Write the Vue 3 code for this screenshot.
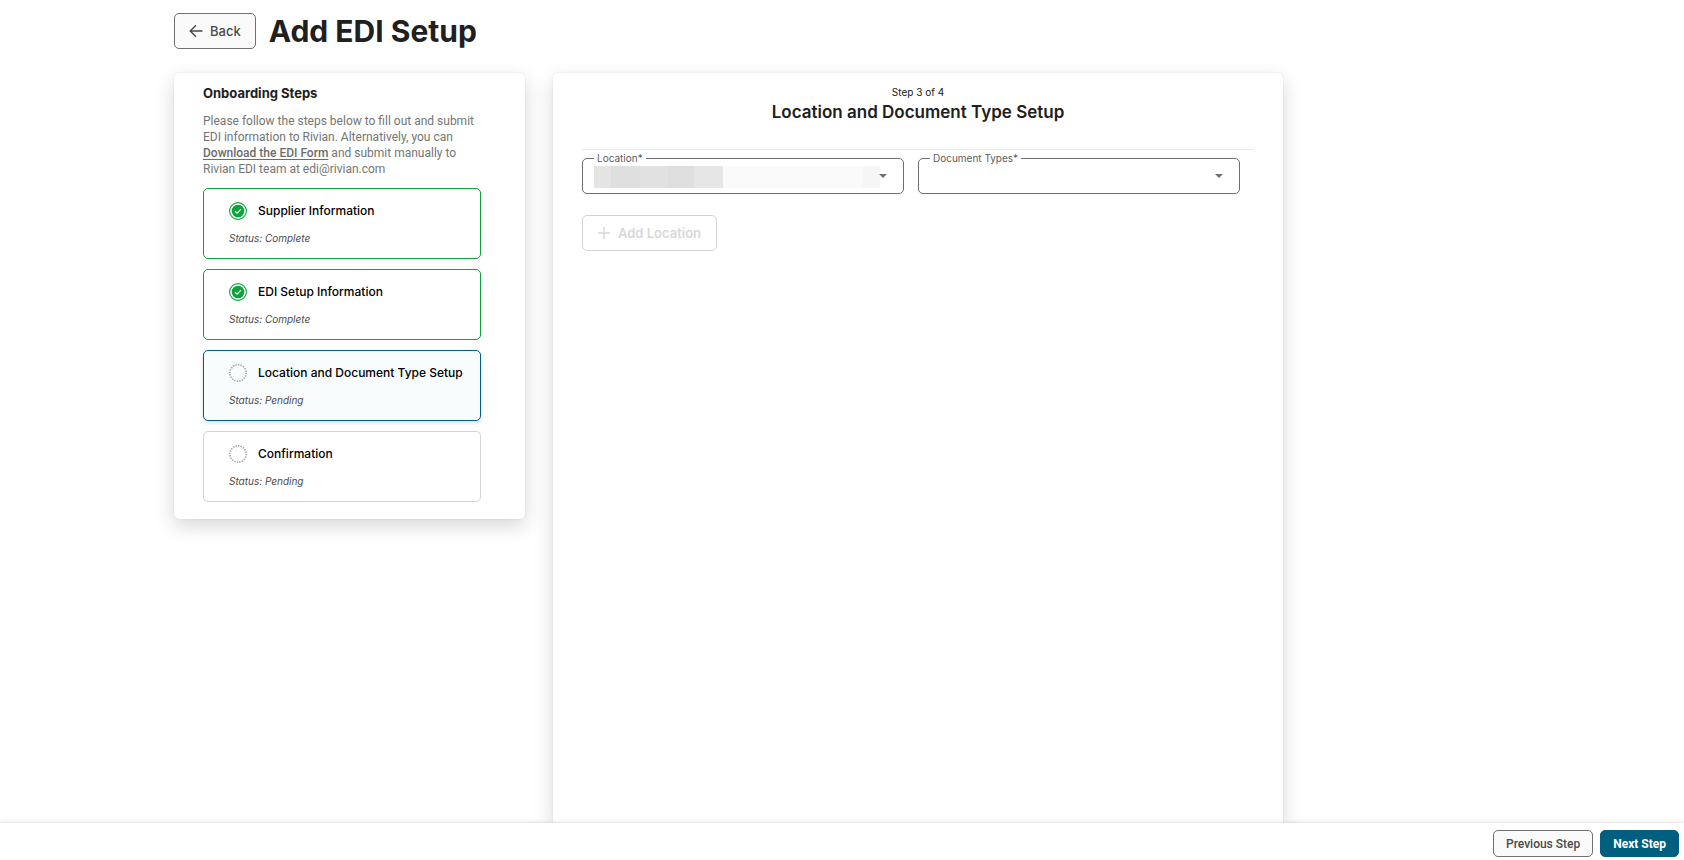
<script setup>
import { ref } from 'vue'

const steps = [
  { title: 'Supplier Information', status: 'Complete', state: 'done' },
  { title: 'EDI Setup Information', status: 'Complete', state: 'done' },
  { title: 'Location and Document Type Setup', status: 'Pending', state: 'current' },
  { title: 'Confirmation', status: 'Pending', state: 'pending' },
]
const location = ref('')
const documentTypes = ref('')
</script>

<template>
  <div class="page">
    <div class="content">
      <header class="header">
        <button type="button" class="btn">
          <svg class="icon" viewBox="0 0 14 14" aria-hidden="true">
            <path d="M13.5 7H1.5M7 1.2L1.2 7L7 12.8" />
          </svg>
          Back
        </button>
        <h1>Add EDI Setup</h1>
      </header>

      <div class="columns">
        <aside class="card sidebar">
          <h2>Onboarding Steps</h2>
          <p class="intro">
            Please follow the steps below to fill out and submit<br />
            EDI information to Rivian. Alternatively, you can<br />
            <a href="#">Download the EDI Form</a> and submit manually to<br />
            Rivian EDI team at edi@rivian.com
          </p>
          <ol class="steps">
            <li v-for="step in steps" :key="step.title" class="step" :class="step.state">
              <div class="step-head">
                <svg v-if="step.state === 'done'" class="step-icon" viewBox="0 0 18 18" aria-hidden="true">
                  <circle cx="9" cy="9" r="8.4" fill="none" stroke="#0aa43b" stroke-width="1.1" />
                  <circle cx="9" cy="9" r="6.3" fill="#0aa43b" />
                  <path d="M6 9.3L8.1 11.2L12 7.2" fill="none" stroke="#fff" stroke-width="1.2" />
                </svg>
                <svg v-else class="step-icon" viewBox="0 0 18 18" aria-hidden="true">
                  <circle cx="9" cy="9" r="8.2" fill="none" stroke="#a0a0a0" stroke-width="1.6" pathLength="40" stroke-dasharray="1 1" />
                </svg>
                <span class="step-title">{{ step.title }}</span>
              </div>
              <em class="step-status">Status: {{ step.status }}</em>
            </li>
          </ol>
        </aside>

        <main class="card main">
          <div class="main-head">
            <p>Step 3 of 4</p>
            <h2>Location and Document Type Setup</h2>
          </div>
          <form @submit.prevent>
            <div class="fields">
              <div class="field">
                <label for="location">Location*</label>
                <select id="location" v-model="location"><option value=""></option></select>
                <div class="redacted" aria-hidden="true"></div>
                <svg class="caret" viewBox="0 0 8 4" aria-hidden="true"><path d="M0 0h8L4 4z" /></svg>
              </div>
              <div class="field">
                <label for="document-types">Document Types*</label>
                <select id="document-types" v-model="documentTypes"><option value=""></option></select>
                <svg class="caret" viewBox="0 0 8 4" aria-hidden="true"><path d="M0 0h8L4 4z" /></svg>
              </div>
            </div>
            <button type="button" class="btn add" disabled>
              <svg class="icon" viewBox="0 0 14 14" aria-hidden="true"><path d="M7 1V13M1 7H13" /></svg>
              Add Location
            </button>
          </form>
        </main>
      </div>
    </div>

    <footer class="footer">
      <button type="button" class="btn small">Previous Step</button>
      <button type="button" class="btn small primary">Next Step</button>
    </footer>
  </div>
</template>

<style>
body {
  margin: 0;
  background: #fff;
}
</style>

<style scoped>
.page {
  display: flex;
  flex-direction: column;
  height: 100vh;
  font-family: Inter, "Liberation Sans", sans-serif;
  color: #202020;
}
h1, h2, p, ol {
  margin: 0;
  padding: 0;
}
.content {
  flex: 1;
  min-height: 0;
  display: flex;
  flex-direction: column;
  gap: 24px;
  padding: 13px 174px 0;
  overflow: hidden;
}
.header {
  display: flex;
  align-items: center;
  gap: 13px;
}
h1 {
  font-size: 30px;
  line-height: 36px;
  font-weight: 700;
}
.btn {
  box-sizing: border-box;
  display: flex;
  align-items: center;
  height: 36px;
  padding: 0 14px;
  gap: 7px;
  border: 1px solid #707072;
  border-radius: 5px;
  background: #fafafa;
  color: #4a4a4a;
  font: 500 13px Inter, "Liberation Sans", sans-serif;
}
.icon {
  width: 14px;
  height: 14px;
  fill: none;
  stroke: currentColor;
  stroke-width: 1.4;
}
.columns {
  flex: 1;
  min-height: 0;
  display: grid;
  grid-template-columns: 351fr 730fr 199fr;
  gap: 28px;
}
.card {
  background: #fff;
  border-radius: 5px;
  box-shadow: 0 0 2px rgba(0, 0, 0, 0.1), 0 7px 20px rgba(0, 0, 0, 0.16);
}
.sidebar {
  align-self: start;
  padding: 12px 44px 17px 29px;
}
.sidebar h2 {
  font-size: 13px;
  line-height: 16px;
  font-weight: 700;
}
.intro {
  margin: 12px 0 11px;
  font-family: Roboto, "Liberation Sans", sans-serif;
  font-size: 12px;
  line-height: 16px;
  color: #757575;
  white-space: nowrap;
}
.intro a {
  color: #6c6c6c;
  font-weight: 500;
  text-underline-offset: 2px;
}
.steps {
  display: grid;
  gap: 10px;
  list-style: none;
}
.step {
  padding: 13px 0 13px 25px;
  border: 1px solid #d3d3d3;
  border-radius: 5px;
  color: #000;
}
.step.done {
  border-color: #0aa43b;
}
.step.current {
  border-color: #005f7f;
  background: #f8fcfd;
  box-shadow: 0 2px 4px rgba(0, 0, 0, 0.14);
}
.step-head {
  display: flex;
  align-items: center;
  gap: 11px;
  height: 18px;
}
.step-icon {
  width: 18px;
  height: 18px;
}
.step-title {
  font-size: 12px;
  line-height: 18px;
  font-weight: 500;
}
.step-status {
  display: block;
  margin-top: 11px;
  font-size: 10px;
  line-height: 14px;
  color: #4a4a4a;
}
.main {
  border-radius: 5px 5px 0 0;
  padding: 12px 29px 0;
}
.main-head {
  padding-bottom: 24px;
  border-bottom: 1px solid #ececec;
  text-align: center;
}
.main-head p {
  font-size: 10px;
  line-height: 14px;
}
.main-head h2 {
  font-size: 17px;
  line-height: 26px;
  font-weight: 600;
}
.fields {
  display: grid;
  grid-template-columns: 1fr 1fr;
  gap: 14px;
  margin: 8px 14px 21px 0;
}
.field {
  position: relative;
}
.field label {
  position: absolute;
  top: -7px;
  left: 12px;
  padding: 0 3px;
  background: #fff;
  font-size: 10px;
  line-height: 14px;
  color: #5c5c5e;
}
.field select {
  display: block;
  width: 100%;
  height: 36px;
  padding: 0 32px 0 12px;
  border: 1px solid #6e6e70;
  border-radius: 5px;
  background: #fff;
  appearance: none;
  font: 13px Inter, sans-serif;
}
.redacted {
  position: absolute;
  top: 8px;
  left: 12px;
  right: 24px;
  height: 22px;
  background: linear-gradient(
    to right,
    #e4e4e4 6%, #dedede 6% 16%, #e1e1e1 16% 26%, #dedede 26% 35%,
    #e6e6e6 35% 45%, #fafafa 45% 94%, #f6f6f6 94%
  );
  pointer-events: none;
}
.caret {
  position: absolute;
  top: 16px;
  right: 17px;
  width: 8px;
  height: 4px;
  fill: #707072;
  pointer-events: none;
}
.add {
  padding: 0 15px 0 14px;
  border-color: #d3d3d3;
  background: #fff;
  color: #d8d8d8;
  font-weight: 600;
}
.footer {
  position: relative;
  display: flex;
  justify-content: flex-end;
  gap: 7px;
  padding: 7px 5px 3px;
  background: #fff;
  box-shadow: 0 0 4px rgba(0, 0, 0, 0.2);
}
.small {
  height: 27px;
  padding: 0 12px;
  font-family: Roboto, "Liberation Sans", sans-serif;
  font-size: 12px;
}
.primary {
  border-color: #005f7f;
  background: #005f7f;
  color: #fff;
  font-weight: 700;
}
</style>
